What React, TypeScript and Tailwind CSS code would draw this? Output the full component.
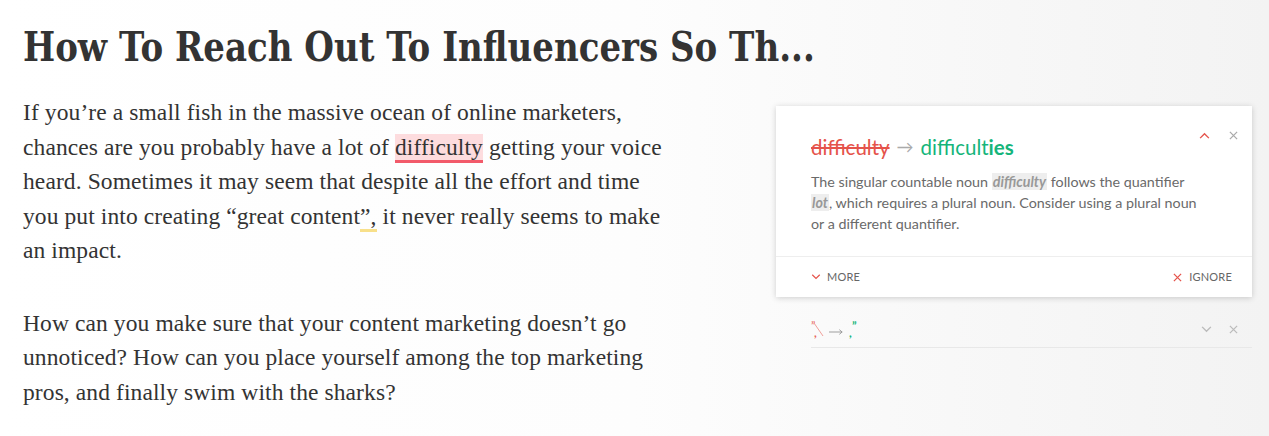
import React from "react";

function ChevronUp({ className }: { className?: string }) {
  return (
    <svg viewBox="0 0 12 8" className={className} fill="none" stroke="currentColor" strokeWidth="1.6">
      <path d="M1 7 L6 2 L11 7" />
    </svg>
  );
}

function ChevronDown({ className }: { className?: string }) {
  return (
    <svg viewBox="0 0 12 8" className={className} fill="none" stroke="currentColor" strokeWidth="1.6">
      <path d="M1 1 L6 6 L11 1" />
    </svg>
  );
}

function Cross({ className }: { className?: string }) {
  return (
    <svg viewBox="0 0 10 10" className={className} fill="none" stroke="currentColor" strokeWidth="1.4">
      <path d="M1 1 L9 9 M9 1 L1 9" />
    </svg>
  );
}

export default function App() {
  return (
    <div className="flex h-[436px] w-full overflow-hidden bg-gradient-to-r from-white via-[#fdfdfd] to-[#f3f3f3] text-[#333]">
      {/* Article */}
      <div className="flex-1 min-w-0 pl-[23px] pt-[22px]">
        <h1
          className="text-[41px] font-bold leading-[50px] text-[#333] whitespace-nowrap origin-left [transform:scaleX(0.83)]"
          style={{ fontFamily: '"DejaVu Serif", serif' }}
        >
          How To Reach Out To Influencers So Th...
        </h1>
        <div
          className="mt-[23px] text-[23.5px] leading-[34.5px] text-[#333] whitespace-nowrap"
          style={{ fontFamily: '"Liberation Serif", serif' }}
        >
          <p className="tracking-[0.1px]">
            If you’re a small fish in the massive ocean of online marketers,
            <br />
            chances are you probably have a lot of{" "}
            <span className="bg-[#fddcde] border-b-[3px] border-[#f25a6a]">difficulty</span> getting your voice
            <br />
            heard. Sometimes it may seem that despite all the effort and time
            <br />
            you put into creating “great content<span className="border-b-[3px] border-[#f8e08a]">”,</span> it never
            really seems to make
            <br />
            an impact.
          </p>
          <p className="mt-[38px] tracking-[0.1px]">
            How can you make sure that your content marketing doesn’t go
            <br />
            unnoticed? How can you place yourself among the top marketing
            <br />
            pros, and finally swim with the sharks?
          </p>
        </div>
      </div>

      {/* Suggestions panel */}
      <div className="w-[476px] shrink-0 mr-[17px] pt-[106px]" style={{ fontFamily: "Lato, sans-serif" }}>
        <div className="bg-white shadow-[0_1px_6px_rgba(0,0,0,0.18)]">
          <div className="pl-[35px] pr-[14px] pt-[26px] pb-[22px]">
            <div className="flex items-start justify-between">
              <div className="flex items-center gap-[7px] pt-[3px] text-[20.5px] leading-[24px]">
                <span className="text-[#e5534b] line-through decoration-[#e5534b]">difficulty</span>
                <span className="text-[#aaa] text-[17px]">→</span>
                <span className="text-[#15b57a]">
                  difficult<span className="font-bold">ies</span>
                </span>
              </div>
              <div className="flex items-center gap-[19px] mt-[-1px]">
                <ChevronUp className="w-[11px] h-[7px] text-[#e5534b]" />
                <Cross className="w-[9px] h-[9px] text-[#aaa]" />
              </div>
            </div>
            <p className="mt-[12px] w-[395px] text-[14.3px] leading-[21px] text-[#6a6a6a]">
              The singular countable noun{" "}
              <span className="bg-[#eee] font-bold italic text-[#999] px-[1px]">difficulty</span> follows the quantifier{" "}
              <span className="bg-[#eee] font-bold italic text-[#999] px-[1px]">lot</span>, which requires a plural noun.
              Consider using a plural noun or a different quantifier.
            </p>
          </div>
          <div className="border-t border-[#eee] flex items-center justify-between pl-[35px] pr-[20px] h-[41px] text-[11px] tracking-[0.2px] text-[#666]">
            <div className="flex items-center gap-[6px]">
              <ChevronDown className="w-[10px] h-[6px] text-[#e5534b]" />
              <span>MORE</span>
            </div>
            <div className="flex items-center gap-[7px]">
              <Cross className="w-[9px] h-[9px] text-[#e5534b]" />
              <span>IGNORE</span>
            </div>
          </div>
        </div>

        {/* Collapsed suggestion */}
        <div className="ml-[35px] mt-[14px] h-[37px] border-b border-[#e8e8e8] flex items-center justify-between">
          <div className="flex items-center gap-[5px] pt-[2px]">
            <span className="relative w-[13px] h-[16px] text-[12px] leading-none text-[#e8675f]">
              <span className="absolute left-0 top-[-2px]">”</span>
              <span className="absolute left-[3px] top-[5px] font-bold">,</span>
              <svg viewBox="0 0 13 16" className="absolute inset-0 w-[13px] h-[16px]" stroke="#f0a09a" strokeWidth="1">
                <path d="M3 1 L12 14" />
              </svg>
            </span>
            <svg viewBox="0 0 16 6" className="w-[15px] h-[6px] mt-[4px]" fill="none" stroke="#999" strokeWidth="1">
              <path d="M0 3 H14 M11 0.5 L14 3 L11 5.5" />
            </svg>
            <span className="relative w-[9px] h-[16px] text-[12px] leading-none font-bold text-[#15b57a]">
              <span className="absolute left-[3px] top-[-2px]">”</span>
              <span className="absolute left-0 top-[5px]">,</span>
            </span>
          </div>
          <div className="flex items-center gap-[17px] mr-[14px]">
            <ChevronDown className="w-[11px] h-[7px] text-[#bbb]" />
            <Cross className="w-[9px] h-[9px] text-[#bbb]" />
          </div>
        </div>
      </div>
    </div>
  );
}
